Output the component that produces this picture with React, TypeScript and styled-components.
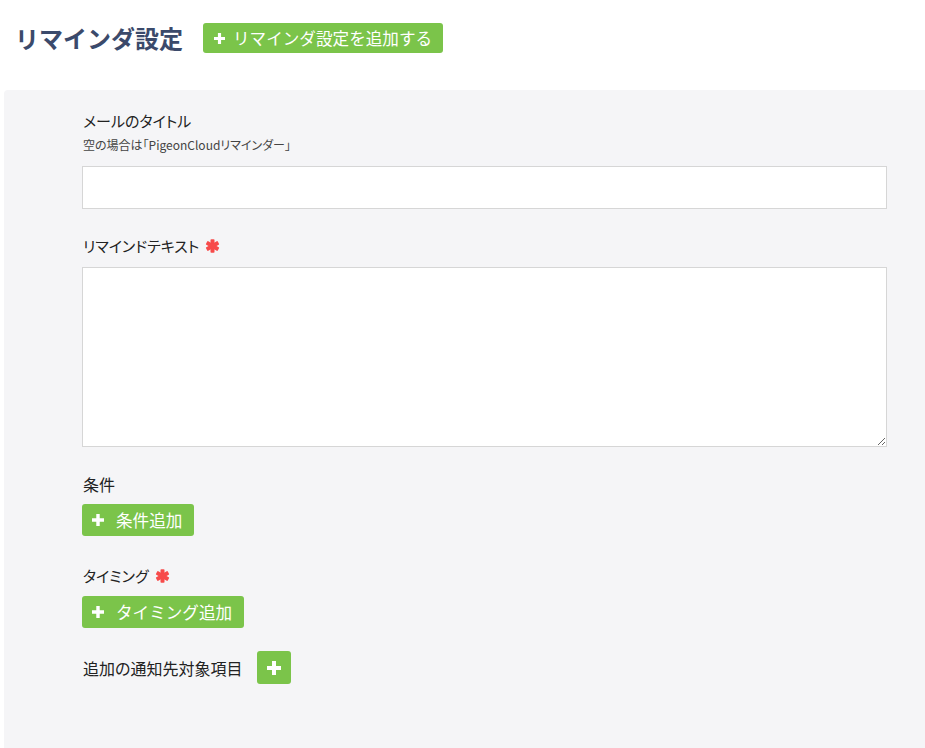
import styled, { createGlobalStyle } from "styled-components";

const GlobalStyle = createGlobalStyle`
  html, body {
    margin: 0;
    padding: 0;
    background: #ffffff;
    font-family: "Noto Sans CJK JP", "Noto Sans", sans-serif;
  }
`;

const Page = styled.div`
  width: 925px;
  height: 748px;
  overflow: hidden;
  display: flex;
  flex-direction: column;
`;

const Header = styled.div`
  display: flex;
  align-items: center;
  gap: 20px;
  padding: 21px 0 35px 15px;
`;

const Title = styled.h1`
  margin: 0;
  font-size: 24px;
  font-weight: 700;
  color: #3b4a6b;
  line-height: 34px;
`;

type BtnSize = "lg" | "md" | "icon";

const GreenButton = styled.button<{ $size?: BtnSize }>`
  display: inline-flex;
  align-items: center;
  justify-content: center;
  gap: ${({ $size }) => ($size === "lg" ? "8px" : "12px")};
  border: none;
  border-radius: 3px;
  background: #7bc44a;
  color: #ffffff;
  font-family: inherit;
  font-size: 16.6px;
  cursor: pointer;
  height: ${({ $size }) => ($size === "lg" ? "30px" : $size === "icon" ? "33px" : "32px")};
  width: ${({ $size }) => ($size === "icon" ? "34px" : "auto")};
  padding: ${({ $size }) =>
    $size === "lg" ? "0 11px 0 11px" : $size === "icon" ? "0" : "0 12px 0 10px"};
`;

const Plus = ({ size = 11 }: { size?: number }) => (
  <svg width={size} height={size} viewBox="0 0 14 14">
    <path d="M5 0h4v5h5v4H9v5H5V9H0V5h5z" fill="#fff" />
  </svg>
);

const Star = () => (
  <svg width="15" height="14" viewBox="0 0 15 14">
    <g fill="#f74b4b" transform="translate(7.5 7)">
      <rect x="-2" y="-6.8" width="4" height="13.6" rx="0.8" />
      <rect x="-2" y="-6.8" width="4" height="13.6" rx="0.8" transform="rotate(60)" />
      <rect x="-2" y="-6.8" width="4" height="13.6" rx="0.8" transform="rotate(120)" />
    </g>
  </svg>
);

const Panel = styled.div`
  flex: 1;
  margin-left: 4px;
  background: #f5f5f7;
  border-top-left-radius: 4px;
  padding: 18px 39px 0 78px;
  display: flex;
  flex-direction: column;
`;

const Field = styled.div<{ $gap?: number }>`
  display: flex;
  flex-direction: column;
  margin-bottom: ${({ $gap }) => $gap ?? 0}px;
`;

const Label = styled.div<{ $size?: number }>`
  display: flex;
  align-items: center;
  gap: 6px;
  font-size: ${({ $size }) => $size ?? 15}px;
  font-weight: 400;
  font-feature-settings: "palt";
  color: #222;
  line-height: 26px;
  padding-left: 1px;
`;

const Hint = styled.div`
  font-size: 12px;
  font-feature-settings: "palt";
  color: #444;
  line-height: 18px;
  margin: 2px 0 12px 1px;
`;

const TextInput = styled.input`
  box-sizing: border-box;
  width: 805px;
  height: 43px;
  border: 1px solid #d6d6d6;
  background: #fff;
  margin: 0;
  outline: none;
`;

const TextArea = styled.textarea`
  box-sizing: border-box;
  width: 805px;
  height: 180px;
  border: 1px solid #d6d6d6;
  background: #fff;
  margin: 8px 0 0;
  outline: none;
  resize: vertical;
  display: block;
`;

const ButtonRow = styled.div`
  margin-top: 7px;
  display: flex;
`;

const InlineRow = styled.div`
  display: flex;
  align-items: center;
  gap: 15px;
`;

export default function App() {
  return (
    <Page>
      <GlobalStyle />
      <Header>
        <Title>リマインダ設定</Title>
        <GreenButton $size="lg">
          <Plus size={11} />
          リマインダ設定を追加する
        </GreenButton>
      </Header>
      <Panel>
        <Field $gap={24}>
          <Label>メールのタイトル</Label>
          <Hint>空の場合は「PigeonCloudリマインダー」</Hint>
          <TextInput type="text" />
        </Field>
        <Field $gap={24}>
          <Label>
            リマインドテキスト
            <Star />
          </Label>
          <TextArea />
        </Field>
        <Field $gap={27}>
          <Label $size={16}>条件</Label>
          <ButtonRow>
            <GreenButton>
              <Plus size={12} />
              条件追加
            </GreenButton>
          </ButtonRow>
        </Field>
        <Field $gap={23}>
          <Label>
            タイミング
            <Star />
          </Label>
          <ButtonRow>
            <GreenButton>
              <Plus size={12} />
              タイミング追加
            </GreenButton>
          </ButtonRow>
        </Field>
        <InlineRow>
          <Label $size={16}>追加の通知先対象項目</Label>
          <GreenButton $size="icon">
            <Plus size={14} />
          </GreenButton>
        </InlineRow>
      </Panel>
    </Page>
  );
}
